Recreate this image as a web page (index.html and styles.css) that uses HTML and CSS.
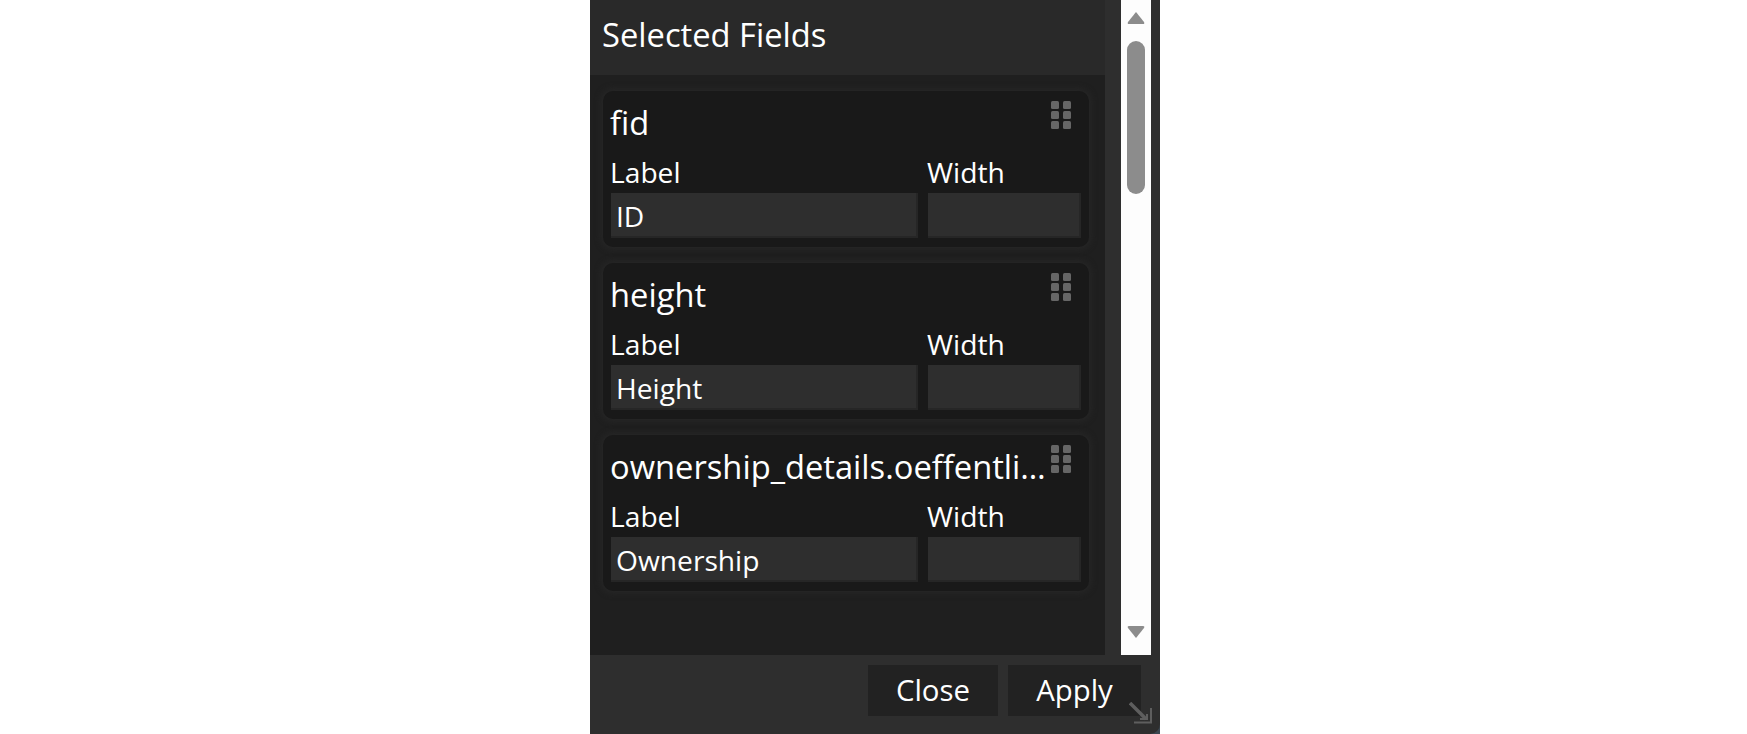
FILE: index.html
```html
<!DOCTYPE html>
<html lang="en">
<head>
<meta charset="utf-8">
<title>Selected Fields</title>
<link rel="stylesheet" href="styles.css">
</head>
<body>
<div class="dialog">
  <div class="upper">
    <div class="main">
      <div class="heading">Selected Fields</div>
      <div class="list">
        <section class="card">
          <div class="card-head">
            <div class="field-name">fid</div>
            <svg class="grip" width="20" height="28" viewBox="0 0 20 28"><g fill="#666"><rect width="8" height="8" rx="1.500"/><rect x="12" width="8" height="8" rx="1.500"/><rect y="10" width="8" height="8" rx="1.500"/><rect x="12" y="10" width="8" height="8" rx="1.500"/><rect y="20" width="8" height="8" rx="1.500"/><rect x="12" y="20" width="8" height="8" rx="1.500"/></g></svg>
          </div>
          <div class="inputs">
            <label class="col-label">Label<input class="text" value="ID"></label>
            <label class="col-width">Width<input class="text"></label>
          </div>
        </section>
        <section class="card">
          <div class="card-head">
            <div class="field-name">height</div>
            <svg class="grip" width="20" height="28" viewBox="0 0 20 28"><g fill="#666"><rect width="8" height="8" rx="1.500"/><rect x="12" width="8" height="8" rx="1.500"/><rect y="10" width="8" height="8" rx="1.500"/><rect x="12" y="10" width="8" height="8" rx="1.500"/><rect y="20" width="8" height="8" rx="1.500"/><rect x="12" y="20" width="8" height="8" rx="1.500"/></g></svg>
          </div>
          <div class="inputs">
            <label class="col-label">Label<input class="text" value="Height"></label>
            <label class="col-width">Width<input class="text"></label>
          </div>
        </section>
        <section class="card">
          <div class="card-head">
            <div class="field-name">ownership_details.oeffentli…</div>
            <svg class="grip" width="20" height="28" viewBox="0 0 20 28"><g fill="#666"><rect width="8" height="8" rx="1.500"/><rect x="12" width="8" height="8" rx="1.500"/><rect y="10" width="8" height="8" rx="1.500"/><rect x="12" y="10" width="8" height="8" rx="1.500"/><rect y="20" width="8" height="8" rx="1.500"/><rect x="12" y="20" width="8" height="8" rx="1.500"/></g></svg>
          </div>
          <div class="inputs">
            <label class="col-label">Label<input class="text" value="Ownership"></label>
            <label class="col-width">Width<input class="text"></label>
          </div>
        </section>
      </div>
    </div>
    <div class="gutter"></div>
    <div class="scrollbar">
      <svg width="18" height="14" viewBox="0 0 18 14"><path d="M9 1 L17 11 Q18 13 16 13 L2 13 Q0 13 1 11 Z" fill="#8c8c8c"/></svg>
      <div class="thumb"></div>
      <svg class="down" width="18" height="14" viewBox="0 0 18 14"><path d="M9 13 L17 3 Q18 1 16 1 L2 1 Q0 1 1 3 Z" fill="#8c8c8c"/></svg>
    </div>
  </div>
  <div class="footer">
    <button class="btn close">Close</button>
    <button class="btn apply">Apply</button>
    <svg class="resize" width="24" height="22" viewBox="0 0 24 22"><path d="M1 1 L17 17" fill="none" stroke="#5e5e5e" stroke-width="3.500"/><path d="M22 6 V20.500 H5 M18 12 V17 H11" fill="none" stroke="#5e5e5e" stroke-width="2"/></svg>
  </div>
</div>
</body>
</html>
```
FILE: styles.css
```css
* { box-sizing: border-box; }
html, body { margin: 0; height: 100%; background: #fff; overflow: hidden; }
body { font-family: "Open Sans", sans-serif; color: #fff; }
.dialog {
  margin-left: 590px;
  width: 570px;
  height: 734px;
  background: #3b4650;
  display: flex;
  flex-direction: column;
}
.upper { display: flex; height: 655px; background: #2e2e2e; }
.main { width: 515px; display: flex; flex-direction: column; background: #1f1f1f; }
.heading {
  height: 75px;
  background: #292929;
  padding: 14px 0 0 12px;
  font-size: 32.700px;
  line-height: 42px;
}
.list { padding: 16px 16px 0 13px; display: flex; flex-direction: column; gap: 16px; }
.card {
  height: 156px;
  background: #191919;
  border-radius: 10px;
  box-shadow: 0 0 6px 2px #272727;
  padding: 0 8px;
}
.card-head { display: flex; justify-content: space-between; height: 62px; }
.field-name {
  width: 436px;
  margin-left: -1px;
  padding-top: 10px;
  font-size: 32.700px;
  line-height: 44px;
  white-space: nowrap;
}
.grip { margin: 10px 10px 0 0; flex: none; }
.inputs { display: flex; gap: 10px; }
.inputs label { display: flex; flex-direction: column; font-size: 28.200px; line-height: 38px; height: 85px; margin-left: -1px; }
.inputs label + label { margin-left: -1px; }
.col-label { width: 308px; }
.col-width { width: 154px; }
.text {
  width: calc(100% - 1px);
  height: 46px;
  margin: 2px 0 0 1px;
  border: 0;
  border-right: 2px solid #262626;
  border-bottom: 2px solid #262626;
  background: #2e2e2e;
  color: #fff;
  font: 28.200px "Open Sans", sans-serif;
  padding: 2px 5px 0;
  outline: none;
}
.gutter { width: 16px; background: #2e2e2e; }
.scrollbar {
  width: 30px;
  background: #fdfdfd;
  display: flex;
  flex-direction: column;
  align-items: center;
  padding: 11px 0 9px;
  margin-right: 9px;
  flex: none;
}
.thumb { width: 18px; height: 153px; margin-top: 16px; border-radius: 9px; background: #8c8c8c; }
.down { margin-top: auto; margin-bottom: 7px; }
.footer {
  position: relative;
  flex: 1;
  display: flex;
  justify-content: flex-end;
  gap: 10px;
  padding: 10px 19px 0 0;
  background: #2e2e2e;
  border-bottom-right-radius: 10px;
}
.btn {
  height: 51px;
  border: 0;
  background: #222;
  color: #fff;
  font: 29.400px/46px "Open Sans", sans-serif;
  padding: 0 0 1px;
}
.close { width: 130px; }
.apply { width: 133px; }
.resize { position: absolute; right: 7px; bottom: 10px; }
```
